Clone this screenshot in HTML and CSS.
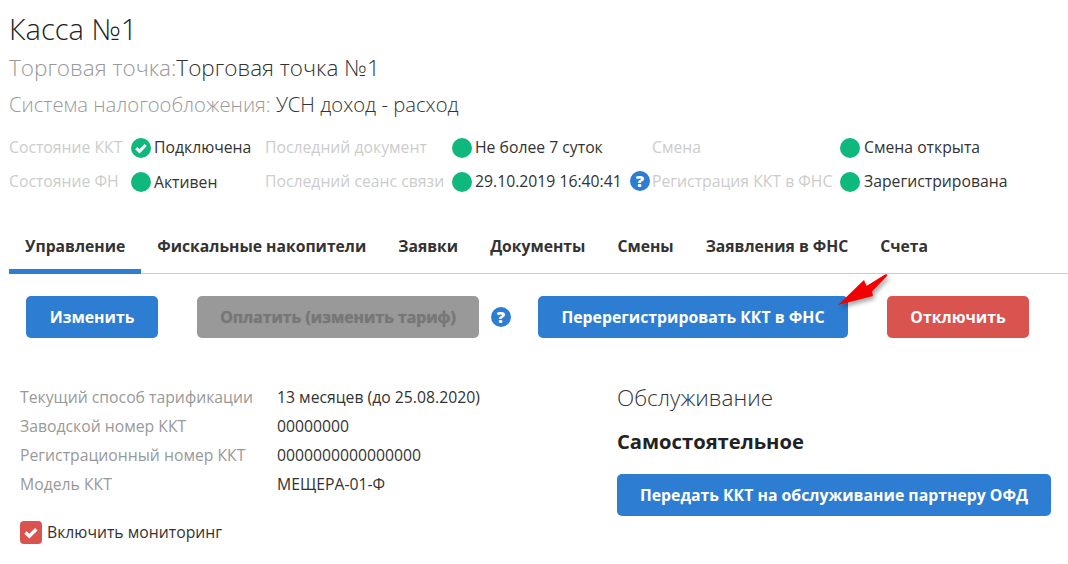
FILE: index.html
```html
<!DOCTYPE html>
<html lang="ru">
<head>
<meta charset="utf-8">
<title>Касса №1</title>
<link rel="stylesheet" href="styles.css">
</head>
<body>
<svg width="0" height="0" class="defs"><defs>
<g id="check"><path d="M5.2 10.2l3.3 3.2 6.2-6.4" fill="none" stroke="#fff" stroke-width="3"/></g>
</defs></svg>
<main class="page">
  <header class="head">
    <h1 class="title">Касса №1</h1>
    <p class="point"><span class="muted">Торговая точка:</span>Торговая точка №1</p>
    <p class="tax"><span class="muted">Система налогообложения:</span> УСН доход - расход</p>
  </header>
  <section class="status">
    <span class="s-label">Состояние ККТ</span>
    <svg class="dot" viewBox="0 0 20 20"><circle cx="10" cy="10" r="10" fill="#0fb87c"/><use href="#check"/></svg>
    <span class="s-value">Подключена</span>
    <span class="s-label">Последний документ</span>
    <span class="dot round"></span>
    <span class="s-value">Не более 7 суток</span>
    <span class="help-slot"></span>
    <span class="s-label">Смена</span>
    <span class="dot round"></span>
    <span class="s-value">Смена открыта</span>

    <span class="s-label">Состояние ФН</span>
    <span class="dot round"></span>
    <span class="s-value low">Активен</span>
    <span class="s-label">Последний сеанс связи</span>
    <span class="dot round"></span>
    <span class="s-value">29.10.2019 16:40:41</span>
    <span class="help-slot"><span class="help">?</span></span>
    <span class="s-label">Регистрация ККТ в ФНС</span>
    <span class="dot round"></span>
    <span class="s-value">Зарегистрирована</span>
  </section>
  <nav class="tabs">
    <a class="tab active">Управление</a>
    <a class="tab">Фискальные накопители</a>
    <a class="tab">Заявки</a>
    <a class="tab">Документы</a>
    <a class="tab">Смены</a>
    <a class="tab">Заявления в ФНС</a>
    <a class="tab">Счета</a>
  </nav>
  <div class="actions">
    <button class="btn blue b-edit">Изменить</button>
    <button class="btn gray b-pay">Оплатить (изменить тариф)</button>
    <span class="help b-help">?</span>
    <button class="btn blue b-rereg">Перерегистрировать ККТ в ФНС</button>
    <button class="btn red b-off">Отключить</button>
    <svg class="arrow" width="60" height="42" viewBox="0 0 60 42"><path d="M2 36 L28 11 L30.5 17 L49 5.5 Q52 4.5 51 7 L36 22.5 L37 27 Z" fill="#f50000"/></svg>
  </div>
  <section class="details">
    <div class="info">
      <dl class="rows">
        <dt>Текущий способ тарификации</dt><dd>13 месяцев (до 25.08.2020)</dd>
        <dt>Заводской номер ККТ</dt><dd>00000000</dd>
        <dt>Регистрационный номер ККТ</dt><dd>0000000000000000</dd>
        <dt>Модель ККТ</dt><dd>МЕЩЕРА-01-Ф</dd>
      </dl>
      <label class="monitor">
        <svg class="box" viewBox="0 0 22 23"><rect width="22" height="23" rx="4" fill="#d9534f"/><path d="M5.5 11.6l3.8 3.6 7-7" fill="none" stroke="#fff" stroke-width="3.4"/></svg>
        <span>Включить мониторинг</span>
      </label>
    </div>
    <div class="service">
      <h2 class="s-title">Обслуживание</h2>
      <p class="s-mode">Самостоятельное</p>
      <button class="btn blue b-partner">Передать ККТ на обслуживание партнеру ОФД</button>
    </div>
  </section>
</main>
</body>
</html>
```
FILE: styles.css
```css
* { box-sizing: border-box; }
html, body { margin: 0; background: #fff; }
body {
  font-family: "Open Sans", "Noto Sans", sans-serif;
  color: #333;
  font-size: 15.75px;
  overflow: hidden;
}
.defs { position: absolute; }
.page { width: 1068px; height: 564px; padding: 11px 0 0 9px; }
.title { margin: 0; font-size: 29px; font-weight: 300; line-height: 36px; color: #222; }
.point { margin: 5px 0 0; font-size: 22.5px; font-weight: 300; line-height: 32px; color: #333; }
.tax { margin: 6px 0 0; font-size: 20.25px; font-weight: 300; line-height: 28px; color: #333; }
.muted { color: #999; }

.status {
  display: grid;
  grid-template-columns: 122px 23px 111px 187px 23px 165px 12px 188px 24px 1fr;
  grid-auto-rows: 34px;
  align-items: center;
  margin-top: 12px;
  font-size: 15.75px;
  line-height: 20px;
}
.s-label { color: #ccc; white-space: nowrap; }
.s-value { color: #333; white-space: nowrap; }
.low { padding-top: 2px; }
.dot { width: 20px; height: 20px; display: block; margin-top: 2px; }
.round { border-radius: 50%; background: #0fb87c; }
.help-slot { display: flex; align-items: center; justify-content: center; }
.help {
  flex: none;
  display: inline-flex;
  align-items: center;
  justify-content: center;
  width: 20px;
  height: 20px;
  margin-left: -12px;
  border-radius: 50%;
  background: #2d7dd2;
  color: #fff;
  font-size: 16.5px;
  font-weight: 800;
  line-height: 1;
}

.tabs {
  display: flex;
  margin-top: 26px;
  width: 1059px;
  height: 50px;
  border-bottom: 1px solid #ccc;
}
.tab {
  padding: 11px 16px 0;
  height: 50px;
  font-size: 15.7px;
  font-weight: 700;
  line-height: 22px;
  color: #333;
  white-space: nowrap;
}
.active { border-bottom: 5px solid #2d7dd2; }

.actions { position: relative; display: flex; align-items: center; margin-top: 22px; padding-left: 17px; }
.btn {
  display: block;
  height: 42px;
  padding: 0;
  border: 0;
  border-radius: 5px;
  color: #fff;
  font: 700 15.8px/42px "Open Sans", "Noto Sans", sans-serif;
  white-space: nowrap;
}
.blue { background: #2d7dd2; }
.gray { background: #999; color: #777; text-shadow: 0 0 1px #777; }
.red { background: #d9534f; }
.b-edit { width: 132px; }
.b-pay { width: 282px; margin-left: 39px; }
.b-help { margin-left: 12px; }
.b-rereg { width: 310px; margin-left: 27px; }
.b-off { width: 142px; margin-left: 39px; }
.arrow { position: absolute; left: 827px; top: -27px; filter: drop-shadow(2px 3px 2px rgba(0,0,0,.35)); }

.details { display: flex; margin-top: 44px; padding-left: 11px; }
.info { width: 597px; }
.rows {
  display: grid;
  grid-template-columns: 257px 1fr;
  grid-auto-rows: 29px;
  align-items: center;
  margin: 0;
  font-size: 15.75px;
  line-height: 20px;
}
.rows dt { color: #999; white-space: nowrap; }
.rows dd { margin: 0; color: #333; white-space: nowrap; }
.monitor { display: flex; align-items: center; gap: 5px; margin-top: 23px; color: #333; line-height: 23px; }
.box { width: 22px; height: 23px; flex: none; }
.service { width: 434px; padding-top: 1px; }
.s-title { margin: 0; font-size: 22.5px; font-weight: 300; line-height: 30px; color: #333; }
.s-mode { margin: 15px 0 0; font-size: 20.2px; font-weight: 700; line-height: 26px; color: #222; }
.b-partner { width: 434px; margin-top: 20px; }
```
